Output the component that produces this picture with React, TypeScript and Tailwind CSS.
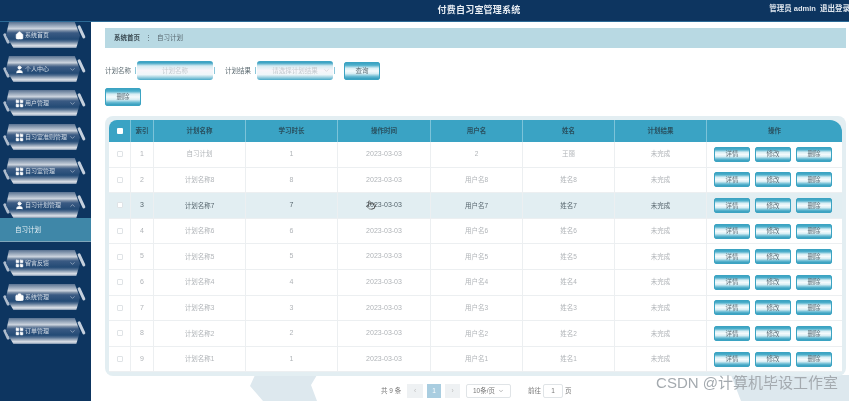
import { ChevronDown, ChevronUp, Home, User, LayoutGrid, Briefcase, Pointer } from "lucide-react";

type MenuItem = {
  label: string;
  icon: "home" | "user" | "grid" | "case";
  arrow?: "down" | "up";
};

const menus: MenuItem[] = [
  { label: "系统首页", icon: "home" },
  { label: "个人中心", icon: "user", arrow: "down" },
  { label: "用户管理", icon: "grid", arrow: "down" },
  { label: "自习室准则管理", icon: "grid", arrow: "down" },
  { label: "自习室管理", icon: "grid", arrow: "down" },
  { label: "自习计划管理", icon: "user", arrow: "up" },
];

const menusAfter: MenuItem[] = [
  { label: "留言反馈", icon: "grid", arrow: "down" },
  { label: "系统管理", icon: "case", arrow: "down" },
  { label: "订单管理", icon: "grid", arrow: "down" },
];

const rows = [
  { id: 1, name: "自习计划", hours: "1", user: "2", real: "王丽" },
  { id: 2, name: "计划名称8", hours: "8", user: "用户名8", real: "姓名8" },
  { id: 3, name: "计划名称7", hours: "7", user: "用户名7", real: "姓名7" },
  { id: 4, name: "计划名称6", hours: "6", user: "用户名6", real: "姓名6" },
  { id: 5, name: "计划名称5", hours: "5", user: "用户名5", real: "姓名5" },
  { id: 6, name: "计划名称4", hours: "4", user: "用户名4", real: "姓名4" },
  { id: 7, name: "计划名称3", hours: "3", user: "用户名3", real: "姓名3" },
  { id: 8, name: "计划名称2", hours: "2", user: "用户名2", real: "姓名2" },
  { id: 9, name: "计划名称1", hours: "1", user: "用户名1", real: "姓名1" },
];

const cols = "grid grid-cols-[22px_23px_92px_92px_93px_92px_92px_92px_135px]";
const headers = ["索引", "计划名称", "学习时长", "操作时间", "用户名", "姓名", "计划结果", "操作"];

function MenuIcon({ icon }: { icon: MenuItem["icon"] }) {
  if (icon === "home") return <Home size={9} fill="white" strokeWidth={1.5} className="text-white" />;
  if (icon === "user") return <User size={9} fill="white" strokeWidth={2.5} className="text-white" />;
  if (icon === "case") return <Briefcase size={9} fill="white" strokeWidth={1.5} className="text-white" />;
  return <LayoutGrid size={9} fill="white" strokeWidth={1.5} className="text-white" />;
}

function SideItem({ item }: { item: MenuItem }) {
  return (
    <div className="relative h-[26px] w-[91px] shrink-0">
      <div className="absolute left-[5px] top-[11px] h-[11px] w-[2.5px] -rotate-[25deg] rounded-full bg-[#aebccd]" />
      <div className="absolute left-[80px] top-[3px] h-[14px] w-[2.5px] -rotate-[25deg] rounded-full bg-[#c5d0dd]" />
      <div className="absolute left-[6px] top-0 flex h-[26px] w-[74px] items-center bg-[linear-gradient(180deg,#5a7392_0%,#8fa0b5_12%,#cdd5df_26%,#7d90a8_33%,#3a5a83_42%,#234a75_66%,#4d6b8e_74%,#a3b1c2_84%,#dfe4eb_92%,#7b90aa_100%)] pl-[9px] text-[#d3dce6] [clip-path:polygon(4%_0,93%_0,100%_52%,95%_100%,10%_100%,0_52%)]">
        <MenuIcon icon={item.icon} />
        <span className="ml-[1px] whitespace-nowrap text-[6px]">{item.label}</span>
        {item.arrow === "down" && <ChevronDown size={7} className="absolute right-[4px] text-[#c8d3df]" />}
        {item.arrow === "up" && <ChevronUp size={7} className="absolute right-[4px] text-[#c8d3df]" />}
      </div>
    </div>
  );
}

function GlossButton({ label, className }: { label: string; className: string }) {
  return (
    <button className={"rounded-[2px] border border-[#3ba3c2] bg-[linear-gradient(180deg,#3ba3c2_0%,#4fb0cc_14%,#d8eef4_32%,#f4fafc_50%,#d8eef4_66%,#5db5cf_86%,#359dbd_100%)] text-[#5f6f78] " + className}>
      {label}
    </button>
  );
}

function PillInput({ placeholder, arrow }: { placeholder: string; arrow?: boolean }) {
  return (
    <div className="relative flex h-[19px] w-[76px] items-center justify-center rounded-[3px] bg-[linear-gradient(180deg,#3fa4c4_0%,#3fa4c4_10%,#d5ebf2_26%,#f8f5f9_50%,#eef6f9_72%,#a9d6e3_84%,#4aa9c8_100%)] text-[6.5px] text-[#c4cacf]">
      <span className="absolute -left-[2px] top-[6px] h-[7px] w-[1px] bg-[#8cc7da]" />
      <span className="absolute -right-[2px] top-[6px] h-[7px] w-[1px] bg-[#8cc7da]" />
      {placeholder}
      {arrow && <ChevronDown size={7} className="absolute right-[3px] text-[#c4cacf]" />}
    </div>
  );
}

export default function App() {
  return (
    <div className="relative flex h-[401px] w-[849px] flex-col overflow-hidden bg-white font-['Liberation_Sans','Noto_Sans_CJK_SC',sans-serif] blur-[0.5px]">
      <header className="flex h-[22px] shrink-0 items-center border-b border-[#2c6a96] bg-[#0d3560]">
        <div className="w-full pl-[109px] text-center text-[9px] font-bold tracking-[0.2px] text-[#e8eef4]">付费自习室管理系统</div>
        <div className="absolute -right-[1px] top-[3px] whitespace-nowrap text-[7.5px] font-bold text-[#dfe6ee]">
          管理员 admin <span className="ml-[2px]">退出登录</span>
        </div>
      </header>

      <div className="flex min-h-0 flex-1">
        <aside className="flex w-[91px] shrink-0 flex-col gap-[8px] overflow-hidden bg-[#0d3560]">
          {menus.map((m) => (
            <SideItem key={m.label} item={m} />
          ))}
          <div className="-mt-[8px] flex h-[24px] shrink-0 items-center border-b border-[#7fa6bb] bg-[#3f87a8] pl-[15px] text-[6.5px] text-[#e6f0f5]">
            自习计划
          </div>
          {menusAfter.map((m) => (
            <SideItem key={m.label} item={m} />
          ))}
        </aside>

        <main className="relative min-w-0 flex-1 pl-[14px] pt-[6px]">
          <svg className="absolute bottom-0 left-0 h-[30px] w-full" viewBox="0 0 758 30" fill="#dde8ee">
            <path d="M164 4 L226 4 L220 14 L226 30 L172 30 L159 15 Z" />
            <path d="M640 4 L758 4 L758 30 L650 30 Z" />
          </svg>

          <div className="relative flex h-[20px] w-[741px] items-center bg-[#b8d9e3] pl-[9px] text-[6.5px]">
            <span className="font-bold text-[#3a4a52]">系统首页</span>
            <span className="mx-[5px] text-[#5a6a72]">⋮</span>
            <span className="text-[#5a6a72]">自习计划</span>
          </div>

          <div className="relative mt-[13px] flex h-[19px] items-center text-[6.5px] text-[#5d6b72]">
            <span className="mr-[6px]">计划名称</span>
            <PillInput placeholder="计划名称" />
            <span className="ml-[12px] mr-[6px]">计划结果</span>
            <PillInput placeholder="请选择计划结果" arrow />
            <GlossButton label="查询" className="ml-[11px] h-[18px] w-[36px] text-[6.5px]" />
          </div>

          <GlossButton label="删除" className="relative mt-[8px] block h-[18px] w-[36px] text-[6.5px]" />

          <div className="relative mt-[10px] w-[741px] rounded-[8px] bg-[#e3eef2] p-[4px]">
            <div className={cols + " h-[22px] rounded-tl-[8px] rounded-tr-[12px] bg-[#3aa3c4] text-[6.5px] text-[#29505f]"}>
              <div className="flex items-center justify-center border-r border-[#7cc3d9]">
                <span className="h-[6px] w-[6px] rounded-[1px] bg-white" />
              </div>
              {headers.map((h, i) => (
                <div key={h} className={"flex items-center justify-center font-bold " + (i < 7 ? "border-r border-[#7cc3d9]" : "")}>
                  {h}
                </div>
              ))}
            </div>
            {rows.map((r) => {
              const hot = r.id === 3;
              const text = hot ? "text-[#56656d]" : "text-[#b0b4b8]";
              const cell = "flex items-center justify-center border-r border-[#eceff1]";
              return (
                <div key={r.id} className={cols + " h-[25.6px] border-b border-[#eceff1] text-[6.5px] " + text + (hot ? " bg-[#e2eef2]" : " bg-white")}>
                  <div className={cell}>
                    <span className={"h-[6px] w-[6px] rounded-[1px] border border-[#dfe3e6]" + (hot ? " bg-white" : "")} />
                  </div>
                  <div className={cell + " text-[7px]"}>{r.id}</div>
                  <div className={cell}>{r.name}</div>
                  <div className={cell + " text-[7px]"}>{r.hours}</div>
                  <div className={cell + " relative text-[7px]"}>
                    2023-03-03
                    {hot && <Pointer size={10} strokeWidth={1.5} className="absolute left-[28px] top-[7px] text-[#444]" />}
                  </div>
                  <div className={cell}>{r.user}</div>
                  <div className={cell}>{r.real}</div>
                  <div className={cell}>未完成</div>
                  <div className="flex items-center gap-[5px] pl-[7px]">
                    <GlossButton label="详情" className="h-[15px] w-[36px] text-[6.5px]" />
                    <GlossButton label="修改" className="h-[15px] w-[36px] text-[6.5px]" />
                    <GlossButton label="删除" className="h-[15px] w-[36px] text-[6.5px]" />
                  </div>
                </div>
              );
            })}
          </div>

          <div className="relative mt-[8px] flex h-[14px] items-center whitespace-nowrap pl-[276px] text-[6.5px] text-[#777]">
            <span className="w-[26px]">共 9 条</span>
            <span className="flex h-[14px] w-[16px] items-center justify-center bg-[#eef1f3] text-[#bbb]">‹</span>
            <span className="ml-[4px] flex h-[14px] w-[14px] items-center justify-center bg-[#a9cde0] text-white">1</span>
            <span className="ml-[4px] flex h-[14px] w-[15px] items-center justify-center bg-[#eef1f3] text-[#bbb]">›</span>
            <span className="ml-[6px] flex h-[14px] w-[45px] items-center justify-between rounded-[2px] border border-[#e0e4e7] px-[6px]">
              10条/页 <ChevronDown size={6} />
            </span>
            <span className="ml-[17px]">前往</span>
            <span className="mx-[2px] flex h-[14px] w-[20px] items-center justify-center rounded-[2px] border border-[#e0e4e7]">1</span>
            <span>页</span>
          </div>
        </main>
      </div>

      <div className="absolute bottom-[7px] right-[11px] whitespace-nowrap text-[15px] text-[#a4aaaf]">CSDN @计算机毕设工作室</div>
    </div>
  );
}
